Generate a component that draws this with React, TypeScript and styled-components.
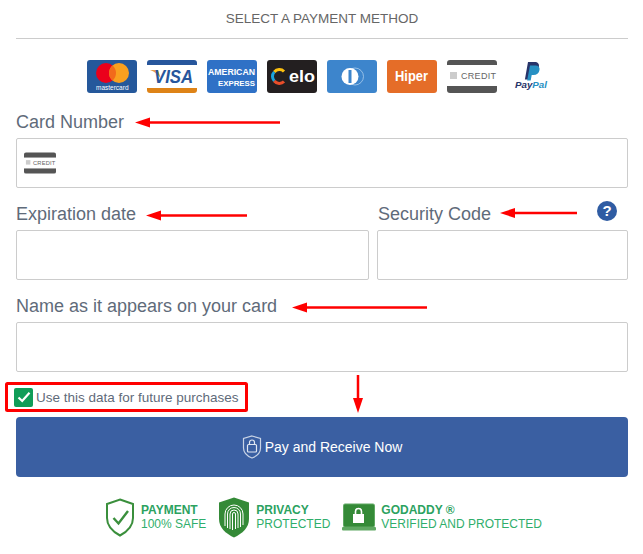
import styled, { createGlobalStyle } from 'styled-components';

const Global = createGlobalStyle`
    html, body {
        margin: 0;
        padding: 0;
        background: #fff;
    }
    body {
        font-family: "Liberation Sans", Arial, sans-serif;
    }
`;

const Page = styled.div`
    position: relative;
    width: 643px;
    height: 554px;
    padding: 11px 15px 0 16px;
    box-sizing: border-box;
    overflow: hidden;
`;

const Title = styled.div`
    height: 27px;
    border-bottom: 1px solid #ccc;
    text-align: center;
    font-size: 13.5px;
    line-height: 16px;
    color: #666;
`;

const CardRow = styled.div`
    display: flex;
    justify-content: center;
    gap: 10px;
    margin-top: 21px;
    height: 33px;
    padding-right: 1px;
`;

const Brand = styled.svg<{ $small?: boolean }>`
    display: block;
    width: ${props => props.$small ? 32 : 50}px;
    height: ${props => props.$small ? 22 : 33}px;
`;

const Field = styled.div<{ $top: number }>`
    margin-top: ${props => props.$top}px;
    min-width: 0;
`;

const Label = styled.div`
    height: 21px;
    margin-bottom: 5px;
    font-size: 18px;
    line-height: 21px;
    color: #5f6b7a;
`;

const SecurityLabel = styled(Label)`
    padding-left: 1px;
`;

const InputBox = styled.div`
    height: 50px;
    box-sizing: border-box;
    border: 1px solid #ccc;
    border-radius: 2px;
    background: #fff;
    display: flex;
    align-items: center;
    padding-left: 7px;
`;

const TwoCols = styled.div`
    display: grid;
    grid-template-columns: 353px 251px;
    column-gap: 8px;
`;

const CheckRow = styled.div`
    display: flex;
    align-items: center;
    gap: 3px;
    height: 20px;
    margin: 15px 0 0 -2px;
    font-size: 13.5px;
    color: #5f6b7a;
`;

const CheckBox = styled.span`
    width: 19px;
    height: 19px;
    border-radius: 2px;
    background: #0f9d58;
    display: flex;
    align-items: center;
    justify-content: center;
`;

const PayButton = styled.div`
    margin-top: 10px;
    height: 60px;
    border-radius: 4px;
    background: #3a5fa2;
    color: #fff;
    font-size: 14px;
    display: flex;
    align-items: center;
    justify-content: center;
    gap: 3px;
`;

const Seals = styled.div`
    display: flex;
    justify-content: center;
    align-items: center;
    margin-top: 20px;
    height: 40px;
    padding-left: 3px;
    gap: 12px;
`;

const Seal = styled.div<{ $gap: number }>`
    display: flex;
    align-items: center;
    gap: ${props => props.$gap}px;
`;

const SealText = styled.div`
    font-size: 12px;
    line-height: 14px;
    color: #2fae6b;
    white-space: nowrap;

    b {
        display: block;
        font-weight: 700;
        color: #2ca25f;
    }
`;

const Overlay = styled.svg`
    position: absolute;
    left: 0;
    top: 0;
    pointer-events: none;
`;

const HelpBadge = styled.div`
    position: absolute;
    left: 597px;
    top: 201px;
    width: 20px;
    height: 20px;
    border-radius: 50%;
    background: #2f5ca3;
    color: #fff;
    font-size: 15px;
    font-weight: 700;
    line-height: 20px;
    text-align: center;
`;

const CreditCard = ({ small }: { small?: boolean }) => (
    <Brand viewBox="0 0 50 33" $small={small}>
        <rect width="50" height="33" rx="3" fill="#555" />
        <rect y={small ? 8 : 5} width="50" height={small ? 17 : 21} fill="#fff" />
        <rect x="3" y="12" width="7" height="7" fill="#ccc" />
        <text x="14" y="19" fontFamily="Liberation Sans" fontSize="9" letterSpacing=".3" fill="#666">CREDIT</text>
    </Brand>
);

const Cards = () => (
    <CardRow>
        <Brand viewBox="0 0 50 33">
            <rect width="50" height="33" rx="3" fill="#25589b" />
            <circle cx="19" cy="13" r="10" fill="#eb001b" />
            <circle cx="32" cy="13" r="10" fill="#f9a01f" />
            <path d="M25.500 5.400a10 10 0 0 1 0 15.200 10 10 0 0 1 0-15.200z" fill="#f26a1b" />
            <text x="9" y="30" fontFamily="Liberation Sans" fontSize="6.500" fill="#fff">mastercard</text>
        </Brand>
        <Brand viewBox="0 0 50 33">
            <rect width="50" height="33" rx="3" fill="#fff" />
            <path d="M0 5V3a3 3 0 0 1 3-3h44a3 3 0 0 1 3 3v2z" fill="#27569c" />
            <path d="M0 28v2a3 3 0 0 0 3 3h44a3 3 0 0 0 3-3v-2z" fill="#de8317" />
            <path d="M3 10h8l3 9C11 14 8 12 3 10z" fill="#e5a04a" />
            <text x="7" y="23" textLength="39" lengthAdjust="spacingAndGlyphs" fontFamily="Liberation Sans" fontSize="18" fontWeight="700" fontStyle="italic" fill="#27569c">VISA</text>
        </Brand>
        <Brand viewBox="0 0 50 33">
            <rect width="50" height="33" rx="3" fill="#2f71c6" />
            <text x="1" y="15" textLength="47" lengthAdjust="spacingAndGlyphs" fontFamily="Liberation Sans" fontSize="9" fontWeight="700" fill="#fff">AMERICAN</text>
            <text x="11" y="26" textLength="37" lengthAdjust="spacingAndGlyphs" fontFamily="Liberation Sans" fontSize="8" fontWeight="700" fill="#fff">EXPRESS</text>
        </Brand>
        <Brand viewBox="0 0 50 33">
            <rect width="50" height="33" rx="3" fill="#231f20" />
            <path d="M7.300 12A6.500 6.500 0 0 1 17 11.500" fill="none" stroke="#fdc00f" strokeWidth="3" />
            <path d="M7.300 21A6.500 6.500 0 0 1 7.300 12" fill="none" stroke="#1aa5dc" strokeWidth="3" />
            <path d="M17 21.500A6.500 6.500 0 0 1 7.300 21" fill="none" stroke="#ea4e2a" strokeWidth="3" />
            <text x="22" y="22" textLength="26" lengthAdjust="spacingAndGlyphs" fontFamily="Liberation Sans" fontSize="17" fontWeight="700" fill="#fff">elo</text>
        </Brand>
        <Brand viewBox="0 0 50 33">
            <rect width="50" height="33" rx="3" fill="#3d85cc" />
            <circle cx="28" cy="16.500" r="8.500" fill="none" stroke="#a9cdec" strokeWidth=".8" />
            <circle cx="23" cy="16.500" r="8.500" fill="#fff" />
            <rect x="21.500" y="10" width="3" height="13" fill="#3d85cc" />
        </Brand>
        <Brand viewBox="0 0 50 33">
            <rect width="50" height="33" rx="3" fill="#e56d28" />
            <text x="8" y="21" textLength="33" lengthAdjust="spacingAndGlyphs" fontFamily="Liberation Sans" fontSize="14" fontWeight="700" fill="#fff">Hiper</text>
        </Brand>
        <CreditCard />
        <Brand viewBox="0 0 50 33">
            <path d="M21 2h6.500c3.500 0 5 2 4.400 5-.7 3.600-3 5.300-6.500 5.300h-2l-1.200 7.200h-4.300z" fill="#27346a" />
            <path d="M23 5.500h5.500c3 0 4.500 1.800 4 4.500-.6 3.300-2.800 5-6 5h-1.800l-1 5.500h-3.600z" fill="#2790c3" />
            <text x="8" y="28" textLength="32" lengthAdjust="spacingAndGlyphs" fontFamily="Liberation Sans" fontSize="9.500" fontWeight="700" fontStyle="italic" fill="#27346a">Pay<tspan fill="#2790c3">Pal</tspan></text>
        </Brand>
    </CardRow>
);

const Arrow = ({ d, head }: { d: string, head: string }) => (
    <>
        <path d={d} stroke="#f00" strokeWidth="2.500" fill="none" />
        <polygon points={head} fill="#f00" />
    </>
);

export default function App() {
    return (
        <Page>
            <Global />
            <Title>SELECT A PAYMENT METHOD</Title>
            <Cards />

            <Field $top={19}>
                <Label>Card Number</Label>
                <InputBox><CreditCard small /></InputBox>
            </Field>

            <TwoCols>
                <Field $top={16}>
                    <Label>Expiration date</Label>
                    <InputBox />
                </Field>
                <Field $top={16}>
                    <SecurityLabel>Security Code</SecurityLabel>
                    <InputBox />
                </Field>
            </TwoCols>

            <Field $top={16}>
                <Label>Name as it appears on your card</Label>
                <InputBox />
            </Field>

            <CheckRow>
                <CheckBox>
                    <svg width="14" height="12" viewBox="0 0 14 12">
                        <path d="M1.500 6.500L5.200 10 12.500 1.800" fill="none" stroke="#fff" strokeWidth="2.200" />
                    </svg>
                </CheckBox>
                Use this data for future purchases
            </CheckRow>

            <PayButton>
                <svg width="20" height="24" viewBox="0 0 20 24">
                    <path d="M10 1l8.500 2.500V13c0 4.500-3.500 8-8.500 10C5 21 1.500 17.500 1.500 13V3.500z" fill="none" stroke="#c9d4e6" strokeWidth="1.200" />
                    <rect x="5.500" y="9.500" width="9" height="7.500" rx="1" fill="none" stroke="#dfe6f1" strokeWidth="1.200" />
                    <path d="M7.500 9.500V7.500a2.500 2.500 0 0 1 5 0v2" fill="none" stroke="#dfe6f1" strokeWidth="1.200" />
                </svg>
                Pay and Receive Now
            </PayButton>

            <Seals>
                <Seal $gap={6}>
                    <svg width="30" height="39" viewBox="0 0 30 39">
                        <path d="M15 1.500l13 4.500v14c0 8-5.500 13.500-13 17.500C7.500 33.500 2 28 2 20V6z" fill="none" stroke="#3a8f3c" strokeWidth="2" />
                        <path d="M8.500 20l5 5.500L23 13" fill="none" stroke="#3a8f3c" strokeWidth="2.400" />
                    </svg>
                    <SealText><b>PAYMENT</b>100% SAFE</SealText>
                </Seal>
                <Seal $gap={6}>
                    <svg width="32" height="41" viewBox="0 0 32 41">
                        <path d="M16 .5L31 5.500V22c0 8.500-6.500 14.500-15 18.500C7.500 36.500 1 30.500 1 22V5.500z" fill="#348a37" />
                        <g fill="none" stroke="#fff" strokeWidth="1">
                            <path d="M7 29V17a9 9 0 0 1 18 0v11" />
                            <path d="M9.500 31V17a6.500 6.500 0 0 1 13 0v13" />
                            <path d="M12 32V17a4 4 0 0 1 8 0v14" />
                            <path d="M14.500 33V17a1.500 1.500 0 0 1 3 0v15" />
                        </g>
                    </svg>
                    <SealText><b>PRIVACY</b>PROTECTED</SealText>
                </Seal>
                <Seal $gap={5}>
                    <svg width="34" height="28" viewBox="0 0 34 28">
                        <rect x="1.500" y="1" width="31" height="23" rx="1.500" fill="#348a37" stroke="#5fa862" />
                        <rect y="24" width="34" height="3.500" rx="1" fill="#5fa862" />
                        <rect x="11" y="11" width="11" height="9" fill="#fff" />
                        <path d="M13.500 11V8.500a3 3 0 0 1 6 0V11" fill="none" stroke="#fff" strokeWidth="1.600" />
                    </svg>
                    <SealText><b>GODADDY ®</b>VERIFIED AND PROTECTED</SealText>
                </Seal>
            </Seals>

            <HelpBadge>?</HelpBadge>

            <Overlay width="643" height="554" viewBox="0 0 643 554">
                <Arrow d="M148 122.500H280" head="135,122.500 150,117.500 150,127.500" />
                <Arrow d="M158 215.500H247" head="146,215.500 161,210.500 161,220.500" />
                <Arrow d="M512 213H577" head="500,213 515,208 515,218" />
                <Arrow d="M304 307.500H427" head="292,307.500 307,302.500 307,312.500" />
                <Arrow d="M358 375V402" head="358,413 353,398 363,398" />
                <rect x="6.500" y="383.500" width="240" height="27" rx="1" fill="none" stroke="#f00" strokeWidth="3" />
            </Overlay>
        </Page>
    );
}
